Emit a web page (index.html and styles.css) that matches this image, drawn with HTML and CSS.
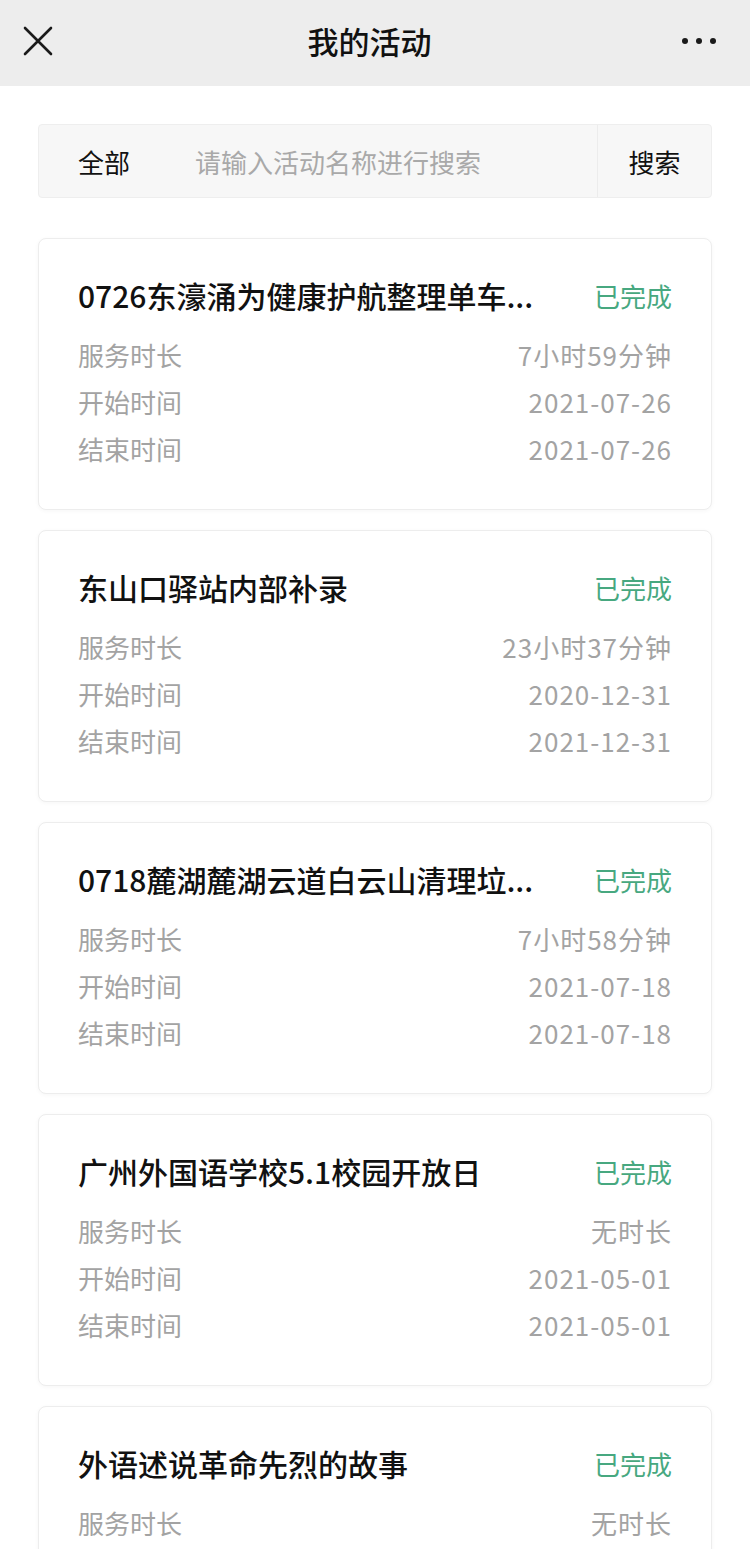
FILE: index.html
```html
<!DOCTYPE html>
<html lang="zh-CN">
<head>
    <meta charset="UTF-8">
    <meta name="viewport" content="width=device-width, initial-scale=1.0">
    <title>我的活动</title>
    <link rel="stylesheet" href="styles.css">
</head>
<body>
    <div class="topbar">
        <div class="close">
            <svg width="30" height="30" viewBox="0 0 30 30"><path d="M2 2 L28 28 M28 2 L2 28" stroke="#1a1a1a" stroke-width="2.6" fill="none" stroke-linecap="round"/></svg>
        </div>
        <div class="title">我的活动</div>
        <div class="more"><span></span><span></span><span></span></div>
    </div>

    <div class="page">
        <div class="search">
            <div class="filter">全部</div>
            <div class="input">请输入活动名称进行搜索</div>
            <div class="btn">搜索</div>
        </div>

        <ul class="list">
            <li class="card">
                <div class="card-head">
                    <div class="name">0726东濠涌为健康护航整理单车...</div>
                    <div class="status">已完成</div>
                </div>
                <div class="row"><span>服务时长</span><span>7小时59分钟</span></div>
                <div class="row"><span>开始时间</span><span>2021-07-26</span></div>
                <div class="row"><span>结束时间</span><span>2021-07-26</span></div>
            </li>
            <li class="card">
                <div class="card-head">
                    <div class="name">东山口驿站内部补录</div>
                    <div class="status">已完成</div>
                </div>
                <div class="row"><span>服务时长</span><span>23小时37分钟</span></div>
                <div class="row"><span>开始时间</span><span>2020-12-31</span></div>
                <div class="row"><span>结束时间</span><span>2021-12-31</span></div>
            </li>
            <li class="card">
                <div class="card-head">
                    <div class="name">0718麓湖麓湖云道白云山清理垃...</div>
                    <div class="status">已完成</div>
                </div>
                <div class="row"><span>服务时长</span><span>7小时58分钟</span></div>
                <div class="row"><span>开始时间</span><span>2021-07-18</span></div>
                <div class="row"><span>结束时间</span><span>2021-07-18</span></div>
            </li>
            <li class="card">
                <div class="card-head">
                    <div class="name">广州外国语学校5.1校园开放日</div>
                    <div class="status">已完成</div>
                </div>
                <div class="row"><span>服务时长</span><span>无时长</span></div>
                <div class="row"><span>开始时间</span><span>2021-05-01</span></div>
                <div class="row"><span>结束时间</span><span>2021-05-01</span></div>
            </li>
            <li class="card">
                <div class="card-head">
                    <div class="name">外语述说革命先烈的故事</div>
                    <div class="status">已完成</div>
                </div>
                <div class="row"><span>服务时长</span><span>无时长</span></div>
            </li>
        </ul>
    </div>
</body>
</html>
```

FILE: styles.css
```css
*{
    padding: 0;
    margin: 0;
    list-style: none;
    box-sizing: border-box;
}
body{
    font-family: "Noto Sans CJK SC", "Noto Sans", sans-serif;
    background-color: #fff;
    color: #111;
    height: 1549px;
    overflow: hidden;
}
.topbar{
    height: 86px;
    background-color: #ededed;
    display: flex;
    align-items: center;
    justify-content: space-between;
    padding: 0 34px 0 23px;
}
.close{
    width: 30px;
    height: 30px;
    display: flex;
    margin-top: -4px;
}
.title{
    font-size: 31px;
    font-weight: 500;
    color: #111;
    margin: -5px 0 0 4px;
}
.more{
    display: flex;
    gap: 8px;
    width: 34px;
    margin-top: -4px;
}
.more span{
    width: 6px;
    height: 6px;
    border-radius: 50%;
    background-color: #1a1a1a;
}
.page{
    padding: 38px 38px 0;
}
.search{
    height: 74px;
    display: flex;
    align-items: center;
    background-color: #f7f7f7;
    border: 1px solid #eeeeee;
    border-radius: 4px;
    font-size: 26px;
}
.filter{
    padding-left: 39px;
    width: 156px;
    color: #111;
}
.input{
    flex: 1;
    color: #a9a9a9;
}
.btn{
    width: 114px;
    height: 100%;
    display: flex;
    align-items: center;
    justify-content: center;
    border-left: 1px solid #ececec;
    color: #111;
}
.list{
    padding-top: 40px;
    display: flex;
    flex-direction: column;
    gap: 20px;
}
.card{
    background-color: #fff;
    border: 1px solid #ededed;
    border-radius: 8px;
    box-shadow: 0 1px 4px rgba(0, 0, 0, 0.04);
    padding: 37px 39px 37px;
}
.card-head{
    display: flex;
    align-items: center;
    justify-content: space-between;
    height: 38px;
    margin-bottom: 17px;
}
.name{
    font-size: 30px;
    font-weight: 500;
    white-space: nowrap;
    color: #111;
}
.status{
    font-size: 26px;
    color: #47a880;
}
.row{
    display: flex;
    justify-content: space-between;
    height: 47px;
    line-height: 47px;
    font-size: 26px;
    color: #a3a3a3;
}
.row span:last-child{
    letter-spacing: 1px;
}
```
